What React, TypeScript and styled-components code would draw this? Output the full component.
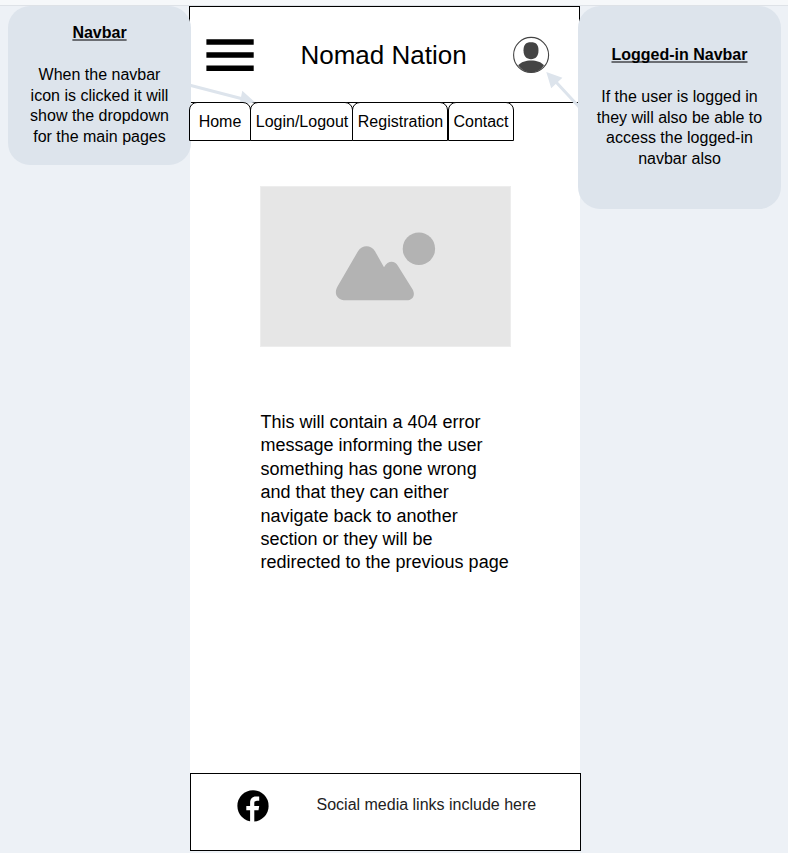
import React from 'react';
import styled, { createGlobalStyle } from 'styled-components';

const GlobalStyle = createGlobalStyle`
  * { box-sizing: border-box; }
  body {
    margin: 0;
    background: #edf1f6;
    color: #000;
    font-family: 'Liberation Sans', Arial, sans-serif;
    font-size: 16px;
  }
`;

const Page = styled.div`
  position: relative;
  width: 788px;
  height: 853px;
  overflow: hidden;
  background: #edf1f6;
`;

const TopStrip = styled.div`
  height: 6px;
  background: #f6f8fa;
  border-bottom: 1px solid #dee2e7;
`;

const Board = styled.div`
  display: grid;
  grid-template-columns: 190px 390px 208px;
  height: 847px;
`;

const Callout = styled.aside<{ $side: 'left' | 'right' }>`
  position: relative;
  z-index: 3;
  width: ${p => (p.$side === 'left' ? 183 : 203)}px;
  height: ${p => (p.$side === 'left' ? 159 : 203)}px;
  margin-left: ${p => (p.$side === 'left' ? 8 : -2)}px;
  padding: 0 16px;
  display: flex;
  flex-direction: column;
  justify-content: center;
  gap: 20.8px;
  border-radius: 22px;
  background: #dde4ec;
  text-align: center;
  line-height: 20.8px;
`;

const CalloutTitle = styled.h2`
  margin: 0;
  font-size: 16px;
  font-weight: 700;
  line-height: 20.8px;
  text-decoration: underline 2px #6b6e73;
  text-underline-offset: 1px;
  text-decoration-skip-ink: none;
`;

const CalloutText = styled.p`
  margin: 0;
  white-space: pre;
`;

const Phone = styled.main`
  display: flex;
  flex-direction: column;
  height: 845px;
  background: #fff;
`;

const Header = styled.header`
  width: 391px;
  height: 97px;
  flex: none;
  margin-left: -1px;
  padding: 0 29px 0 16px;
  display: flex;
  align-items: center;
  justify-content: space-between;
  border: 1px solid #000;
`;

const Title = styled.h1`
  margin: 0;
  font-size: 26px;
  font-weight: 400;
  line-height: 34px;
`;

const Tabs = styled.nav`
  position: relative;
  z-index: 4;
  display: flex;
  flex: none;
  height: 39px;
  margin: -1px 0 0 -1px;
`;

const Tab = styled.span<{ $width: number; $overlap?: boolean; $indent?: number }>`
  width: ${p => p.$width}px;
  margin-left: ${p => (p.$overlap ? -1 : 0)}px;
  padding-left: ${p => p.$indent ?? 0}px;
  display: flex;
  align-items: center;
  justify-content: center;
  border: 1px solid #000;
  border-radius: 8px 8px 0 0;
  background: #fff;
  white-space: nowrap;
`;

const Content = styled.section`
  flex: 1;
  padding: 45px 0 0 70px;
`;

const Placeholder = styled.div`
  width: 251px;
  height: 161px;
  border: 1px solid #ededed;
  background: #e6e6e6;
  svg { display: block; }
`;

const Message = styled.p`
  margin: 64px 0 0 0.5px;
  width: 255px;
  font-size: 18px;
  line-height: 23.4px;
  white-space: pre;
`;

const Footer = styled.footer`
  position: relative;
  width: 391px;
  height: 78px;
  flex: none;
  padding: 17px 0 0 46px;
  display: flex;
  align-items: flex-start;
  gap: 47.5px;
  border: 1px solid #000;
  color: #222;
  svg { overflow: visible; }
`;

const FooterText = styled.span`
  padding-top: 4px;
  line-height: 20.8px;
`;

const Arrows = styled.svg`
  position: absolute;
  inset: 0;
  z-index: 2;
  pointer-events: none;
`;

const tabs = [
  { label: 'Home', width: 62 },
  { label: 'Login/Logout', width: 103, overlap: true, indent: 1 },
  { label: 'Registration', width: 96, overlap: true, indent: 1 },
  { label: 'Contact', width: 66 },
];

const MenuIcon = () => (
  <svg width="48" height="32" viewBox="0 0 48 32">
    <path d="M0.4 0.2H47.7V5.7H0.4ZM0.4 13.3H47.7V18.8H0.4ZM0.4 26.4H47.7V31.9H0.4Z" fill="#000" />
  </svg>
);

const UserIcon = () => (
  <svg width="37" height="37" viewBox="0 0 37 37">
    <circle cx="18.1" cy="18.9" r="17.5" fill="#fff" stroke="#444" strokeWidth="1.1" />
    <path d="M18 6.2C23.3 6.2 25.5 8.8 25.5 14.5C25.5 20 22.5 23.2 18 23.2C13.5 23.2 10.5 20 10.5 14.5C10.5 8.8 12.7 6.2 18 6.2Z" fill="#444" />
    <path d="M5.2 29.3C8 25.8 12.5 24.4 18.1 24.4C23.7 24.4 28.2 25.8 31 29.3C27.7 34.2 23 36.5 18.1 36.5C13.2 36.5 8.7 34.2 5.2 29.3Z" fill="#444" />
  </svg>
);

const ImageIcon = () => (
  <svg width="249" height="159" viewBox="261 187 249 159">
    <circle cx="418.9" cy="248.7" r="16.2" fill="#b3b3b3" />
    <path d="M358 251.2C362 244.5 371 244.5 375 251.2L384 267.3C388 260.2 394.5 260.3 398 266L412.2 288.7C416 294.8 413 300.3 406.5 300.3H346C337 300.3 333.5 293.5 337.5 286.5Z" fill="#b3b3b3" />
  </svg>
);

const FacebookIcon = () => (
  <svg width="32" height="32" viewBox="0 0 32 32">
    <circle cx="16" cy="14.9" r="15.6" fill="#000" />
    <path d="M13.1 32V19.3H9.3V15H13.1V12C13.1 7.7 15.3 5.4 18.9 5.4H22.2V9.7H20.1C18.2 9.7 17.3 10.6 17.3 12.3V15H22.2L21.5 19.3H17.3V32Z" fill="#fff" />
  </svg>
);

export default function App() {
  return (
    <>
      <GlobalStyle />
      <Page>
        <TopStrip />
        <Board>
          <Callout $side="left">
            <CalloutTitle>Navbar</CalloutTitle>
            <CalloutText>{'When the navbar\nicon is clicked it will\nshow the dropdown\nfor the main pages'}</CalloutText>
          </Callout>
          <Phone>
            <Header>
              <MenuIcon />
              <Title>Nomad Nation</Title>
              <UserIcon />
            </Header>
            <Tabs>
              {tabs.map(t => (
                <Tab key={t.label} $width={t.width} $overlap={t.overlap} $indent={t.indent}>{t.label}</Tab>
              ))}
            </Tabs>
            <Content>
              <Placeholder><ImageIcon /></Placeholder>
              <Message>{'This will contain a 404 error\nmessage informing the user\nsomething has gone wrong\nand that they can either\nnavigate back to another\nsection or they will be\nredirected to the previous page'}</Message>
            </Content>
            <Footer>
              <FacebookIcon />
              <FooterText>Social media links include here</FooterText>
            </Footer>
          </Phone>
          <Callout $side="right">
            <CalloutTitle>Logged-in Navbar</CalloutTitle>
            <CalloutText>{'If the user is logged in\nthey will also be able to\naccess the logged-in\nnavbar also'}</CalloutText>
          </Callout>
        </Board>
        <Arrows width="788" height="853" viewBox="0 0 788 853">
          <g fill="#dde4ec" stroke="#dde4ec">
            <path d="M188 84.8L244 99.3M581 109L556 82" strokeWidth="3" />
            <path d="M242.3 90.8L255 102.3L239.3 105.5ZM546.3 72L562.4 77.7L551.2 88.2Z" stroke="none" />
          </g>
        </Arrows>
      </Page>
    </>
  );
}
